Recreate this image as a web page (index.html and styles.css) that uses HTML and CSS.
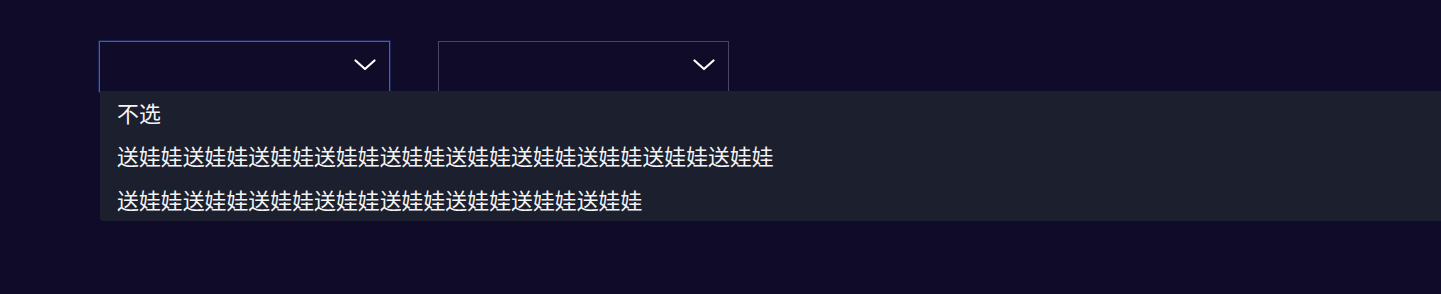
FILE: index.html
```html
<!DOCTYPE html>
<html lang="zh">
<head>
<meta charset="utf-8">
<title>Select</title>
<link rel="stylesheet" href="styles.css">
</head>
<body>
<div class="page">
  <div class="select active-select">
    <span class="value"></span>
    <svg class="chevron" width="22" height="12" viewBox="0 0 22 12"><path d="M1.5 1.5 L11 10 L20.5 1.5" fill="none" stroke="#ffffff" stroke-width="2.2" stroke-linecap="round" stroke-linejoin="round"/></svg>
    <ul class="menu">
      <li class="option">不选</li>
      <li class="option">送娃娃送娃娃送娃娃送娃娃送娃娃送娃娃送娃娃送娃娃送娃娃送娃娃</li>
      <li class="option">送娃娃送娃娃送娃娃送娃娃送娃娃送娃娃送娃娃送娃娃</li>
    </ul>
  </div>
  <div class="select idle-select">
    <span class="value"></span>
    <svg class="chevron" width="22" height="12" viewBox="0 0 22 12"><path d="M1.5 1.5 L11 10 L20.5 1.5" fill="none" stroke="#ffffff" stroke-width="2.2" stroke-linecap="round" stroke-linejoin="round"/></svg>
  </div>
</div>
</body>
</html>
```
FILE: styles.css
```css
html, body {
  margin: 0;
  padding: 0;
  background: #0f0b29;
  overflow: hidden;
  height: 294px;
}
body {
  font-family: "Noto Sans CJK SC", "Noto Sans", sans-serif;
  color: #f4f4f4;
}
.page {
  display: flex;
  gap: 48px;
  padding: 41px 0 0 99px;
}
.select {
  position: relative;
  box-sizing: border-box;
  width: 291px;
  height: 51px;
  display: flex;
  align-items: center;
  justify-content: flex-end;
  padding-right: 13px;
  padding-bottom: 4px;
}
.idle-select {
  border: 1px solid #4a4562;
}
.active-select {
  border: 1px solid #2d63d6;
  box-shadow: 0 0 0 0.5px rgba(45, 99, 214, 0.6);
}
.chevron {
  display: block;
}
.menu {
  position: absolute;
  left: 0;
  top: 49px;
  width: 1400px;
  height: 130px;
  margin: 0;
  padding: 0;
  list-style: none;
  background: #1c1f2d;
  border-radius: 0 0 3px 3px;
  z-index: 2;
}
.option {
  height: 43.33px;
  line-height: 43px;
  padding-left: 17px;
  font-size: 21.9px;
  white-space: nowrap;
}
```
